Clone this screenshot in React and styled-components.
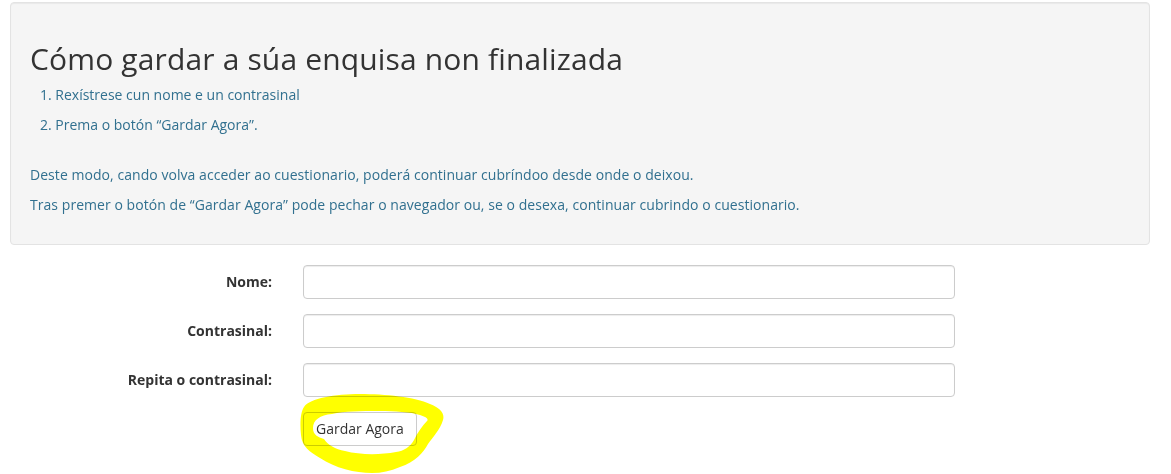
import React from "react";
import styled, { createGlobalStyle } from "styled-components";

const GlobalStyle = createGlobalStyle`
  * { box-sizing: border-box; }
  html, body { min-height: 100vh; }
  body {
    margin: 0;
    background: #fff;
    font-family: "Open Sans", "Liberation Sans", sans-serif;
    font-size: 14px;
    line-height: 20px;
    color: #333;
  }
`;

const fields = [
  { id: "nome", label: "Nome:" },
  { id: "pass", label: "Contrasinal:" },
  { id: "pass2", label: "Repita o contrasinal:" },
];

function Highlight() {
  return (
    <Scribble viewBox="296 390 150 84" width="150" height="84">
      <path
        fillRule="evenodd"
        fill="#ffff00"
        d="M304,407 C310,398 335,394 360,394 C385,394 415,397 430,404 C440,408 445,413 443,420 C440,430 432,438 428,444 C424,452 415,462 400,467 C390,471 382,473 372,473 C355,473 335,468 320,458 C310,452 302,447 301,435 C300,425 300,413 304,407 Z
           M313,428 C313,420 320,415 332,414 C345,411 360,411 380,411 C395,411 410,412 420,415 C426,417 429,419 427,421 C422,426 418,432 414,440 C410,447 404,451 396,452 C380,455 360,455 345,451 C335,449 328,445 324,439 C318,437 313,435 313,428 Z"
      />
    </Scribble>
  );
}

export default function App() {
  return (
    <>
      <GlobalStyle />
      <Page>
        <Well>
          <Title>Cómo gardar a súa enquisa non finalizada</Title>
          <Steps>
            <li>Rexístrese cun nome e un contrasinal</li>
            <li>Prema o botón “Gardar Agora”.</li>
          </Steps>
          <Info>Deste modo, cando volva acceder ao cuestionario, poderá continuar cubríndoo desde onde o deixou.</Info>
          <Info>Tras premer o botón de “Gardar Agora” pode pechar o navegador ou, se o desexa, continuar cubrindo o cuestionario.</Info>
        </Well>
        <Form onSubmit={(e) => e.preventDefault()}>
          {fields.map((f) => (
            <React.Fragment key={f.id}>
              <Label htmlFor={f.id}>{f.label}</Label>
              <Input id={f.id} type={f.id === "nome" ? "text" : "password"} />
            </React.Fragment>
          ))}
          <span />
          <ButtonWrap>
            <Button type="submit">Gardar Agora</Button>
            <Highlight />
          </ButtonWrap>
        </Form>
      </Page>
    </>
  );
}

const Page = styled.div`
  padding: 2px 21px 0 10px;
`;

const Well = styled.div`
  background: #f5f5f5;
  border: 1px solid #e3e3e3;
  border-radius: 4px;
  box-shadow: inset 0 1px 1px rgba(0, 0, 0, 0.05);
  padding: 19px;
  margin-bottom: 20px;
`;

const Title = styled.h2`
  margin: 20px 0 10px;
  font-size: 30px;
  font-weight: 400;
  line-height: 33px;
  letter-spacing: 0.15px;
  color: #333;
`;

const Steps = styled.ol`
  margin: 0 0 30px;
  padding-left: 10px;
  list-style-position: inside;
  color: #31708f;
  li {
    margin-bottom: 10px;
  }
`;

const Info = styled.p`
  margin: 0 0 10px;
  color: #31708f;
  letter-spacing: 0.05px;
`;

const Form = styled.form`
  display: grid;
  grid-template-columns: 262px 652px;
  column-gap: 31px;
  row-gap: 15px;
`;

const Label = styled.label`
  text-align: right;
  font-weight: 700;
  padding-top: 7px;
  color: #333;
`;

const Input = styled.input`
  display: block;
  width: 100%;
  height: 34px;
  padding: 6px 12px;
  font: inherit;
  color: #555;
  background: #fff;
  border: 1px solid #ccc;
  border-radius: 4px;
  box-shadow: inset 0 1px 1px rgba(0, 0, 0, 0.075);
  outline: none;
`;

const ButtonWrap = styled.div`
  position: relative;
  justify-self: start;
`;

const Button = styled.button`
  display: block;
  padding: 6px 12px;
  font: inherit;
  line-height: 20px;
  color: #333;
  background: #fff;
  border: 1px solid #ccc;
  border-radius: 4px;
  cursor: pointer;
`;

const Scribble = styled.svg`
  position: absolute;
  left: -7px;
  top: -22px;
  mix-blend-mode: multiply;
  pointer-events: none;
`;
